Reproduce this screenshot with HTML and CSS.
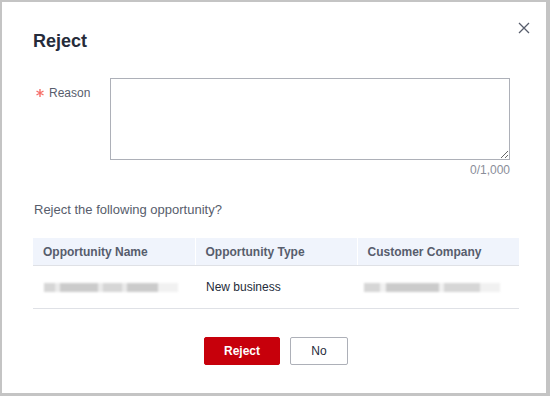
FILE: index.html
```html
<!DOCTYPE html>
<html lang="en">
<head>
    <meta charset="UTF-8">
    <meta name="viewport" content="width=device-width, initial-scale=1.0">
    <title>Reject</title>
    <link rel="stylesheet" href="styles.css">
</head>
<body>
    <div class="dialog">
        <div class="dialog-header">
            <h2 class="title">Reject</h2>
            <button class="close" aria-label="Close">
                <svg width="12" height="12" viewBox="0 0 12 12"><path d="M1 1L11 11M11 1L1 11" stroke="#575d6c" stroke-width="1.3" fill="none"/></svg>
            </button>
        </div>

        <div class="form-row">
            <label class="label">
                <svg class="req" width="8" height="8" viewBox="0 0 8 8"><path d="M4 0V8M0.5 2L7.5 6M7.5 2L0.5 6" stroke="#f66f6a" stroke-width="1.4" fill="none"/></svg>
                Reason
            </label>
            <div class="field">
                <textarea class="textarea"></textarea>
                <div class="count">0/1,000</div>
            </div>
        </div>

        <p class="question">Reject the following opportunity?</p>

        <table class="grid">
            <thead>
                <tr>
                    <th>Opportunity Name</th>
                    <th>Opportunity Type</th>
                    <th>Customer Company</th>
                </tr>
            </thead>
            <tbody>
                <tr>
                    <td><span class="blur blur-name"></span></td>
                    <td>New business</td>
                    <td><span class="blur blur-company"></span></td>
                </tr>
            </tbody>
        </table>

        <div class="actions">
            <button class="btn btn-primary">Reject</button>
            <button class="btn">No</button>
        </div>
    </div>
</body>
</html>
```

FILE: styles.css
```css
body {
    margin: 0;
    padding: 2px 4px 3px 2px;
    background: #c4c4c4;
    font-family: "Liberation Sans", Arial, sans-serif;
    font-size: 12px;
    color: #575d6c;
}
.dialog {
    background: #fff;
    height: 391px;
    box-sizing: border-box;
    padding: 0 26px 0 31px;
}
.dialog-header {
    display: flex;
    justify-content: space-between;
    align-items: flex-start;
    height: 76px;
}
.title {
    margin: 29px 0 0 0;
    font-size: 18px;
    font-weight: bold;
    color: #252b3a;
}
.close {
    margin: 20px -11px 0 0;
    padding: 0;
    border: none;
    background: none;
    width: 14px;
    height: 14px;
    cursor: pointer;
}
.form-row {
    display: flex;
}
.label {
    display: flex;
    align-items: center;
    gap: 5px;
    align-self: flex-start;
    width: 77px;
    height: 14px;
    margin-top: 8px;
    padding-left: 3px;
    box-sizing: border-box;
}
.req {
    flex: none;
}
.field {
    width: 400px;
}
.textarea {
    display: block;
    width: 400px;
    height: 82px;
    box-sizing: border-box;
    border: 1px solid #adb0b8;
    border-radius: 0;
    margin: 0;
}
.count {
    text-align: right;
    color: #8a8e99;
    margin-top: 3px;
}
.question {
    margin: 25px 0 0 1px;
    font-size: 13px;
}
.grid {
    margin-top: 21px;
    width: 486px;
    border-collapse: collapse;
    table-layout: fixed;
}
.grid th {
    background: #f0f4fc;
    height: 27px;
    text-align: left;
    padding: 0 10px;
    font-weight: bold;
    border-left: 1px solid #fff;
    border-bottom: 1px solid #dfe1e6;
}
.grid th:first-child {
    border-left: none;
}
.grid td {
    height: 42px;
    padding: 0 11px;
    border-bottom: 1px solid #dfe1e6;
    color: #252b3a;
}
.blur {
    display: block;
    height: 9px;
    filter: blur(1px);
    opacity: 0.6;
}
.blur-name {
    width: 134px;
    background: linear-gradient(90deg, #bbb 0 8%, #ddd 8% 12%, #aaa 12% 40%, #ddd 40% 44%, #bbb 44% 58%, #ddd 58% 62%, #aaa 62% 85%, #e8e8e8 85% 100%);
}
.blur-company {
    width: 136px;
    margin-left: -4px;
    background: linear-gradient(90deg, #bbb 0 12%, #e8e8e8 12% 16%, #aaa 16% 55%, #e8e8e8 55% 59%, #bbb 59% 85%, #e8e8e8 85% 100%);
}
.actions {
    display: flex;
    justify-content: center;
    gap: 10px;
    margin-top: 28px;
    padding-right: 1px;
}
.btn {
    height: 28px;
    min-width: 58px;
    padding: 0 16px;
    border: 1px solid #adb0b8;
    border-radius: 2px;
    background: #fff;
    color: #252b3a;
    font-family: inherit;
    font-size: 12px;
    cursor: pointer;
}
.btn-primary {
    min-width: 76px;
    background: #c7000b;
    border-color: #c7000b;
    color: #fff;
    font-weight: bold;
}
```
